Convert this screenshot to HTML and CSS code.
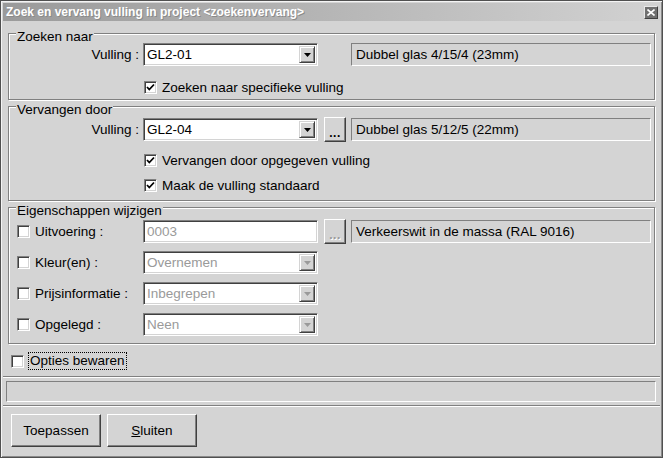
FILE: index.html
```html
<!DOCTYPE html>
<html>
<head>
	<title>Zoek en vervang vulling</title>
	<link rel="stylesheet" href="styles.css">
</head>
<body>
<div class="window">
	<div class="titlebar">
		<span class="title">Zoek en vervang vulling in project &lt;zoekenvervang&gt;</span>
		<span class="close">
			<svg width="8" height="7" viewBox="0 0 8 7"><path d="M0.5 0.5 L7.5 6.5 M7.5 0.5 L0.5 6.5" stroke="#fff" stroke-width="1.6"/></svg>
		</span>
	</div>
	<div class="client">

		<div class="group g1">
			<span class="legend">Zoeken naar</span>
			<div class="row">
				<span class="lbl">Vulling :</span>
				<div class="combo">
					<span class="val">GL2-01</span>
					<span class="drop"><svg width="7" height="4" viewBox="0 0 7 4"><path d="M0 0 H7 L3.5 4 Z" fill="#000"/></svg></span>
				</div>
				<div class="static far">Dubbel glas 4/15/4 (23mm)</div>
			</div>
			<div class="check-row first">
				<span class="box"><svg width="9" height="9" viewBox="0 0 9 9"><path d="M1 4 L3.3 6.5 L8 1.5" stroke="#000" stroke-width="1.8" fill="none"/></svg></span>
				<span>Zoeken naar specifieke vulling</span>
			</div>
		</div>

		<div class="group g2">
			<span class="legend">Vervangen door</span>
			<div class="row">
				<span class="lbl">Vulling :</span>
				<div class="combo">
					<span class="val">GL2-04</span>
					<span class="drop"><svg width="7" height="4" viewBox="0 0 7 4"><path d="M0 0 H7 L3.5 4 Z" fill="#000"/></svg></span>
				</div>
				<div class="dots-btn"><span>...</span></div>
				<div class="static">Dubbel glas 5/12/5 (22mm)</div>
			</div>
			<div class="check-row first">
				<span class="box"><svg width="9" height="9" viewBox="0 0 9 9"><path d="M1 4 L3.3 6.5 L8 1.5" stroke="#000" stroke-width="1.8" fill="none"/></svg></span>
				<span>Vervangen door opgegeven vulling</span>
			</div>
			<div class="check-row">
				<span class="box"><svg width="9" height="9" viewBox="0 0 9 9"><path d="M1 4 L3.3 6.5 L8 1.5" stroke="#000" stroke-width="1.8" fill="none"/></svg></span>
				<span>Maak de vulling standaard</span>
			</div>
		</div>

		<div class="group g3">
			<span class="legend">Eigenschappen wijzigen</span>
			<div class="row prop">
				<span class="plbl"><span class="box"></span>Uitvoering :</span>
				<div class="combo off"><span class="val">0003</span></div>
				<div class="dots-btn off"><span>...</span></div>
				<div class="static">Verkeerswit in de massa (RAL 9016)</div>
			</div>
			<div class="row prop">
				<span class="plbl"><span class="box"></span>Kleur(en) :</span>
				<div class="combo off">
					<span class="val">Overnemen</span>
					<span class="drop"><svg width="7" height="4" viewBox="0 0 7 4"><path d="M0 0 H7 L3.5 4 Z" fill="#9a9a9a"/></svg></span>
				</div>
			</div>
			<div class="row prop">
				<span class="plbl"><span class="box"></span>Prijsinformatie :</span>
				<div class="combo off">
					<span class="val">Inbegrepen</span>
					<span class="drop"><svg width="7" height="4" viewBox="0 0 7 4"><path d="M0 0 H7 L3.5 4 Z" fill="#9a9a9a"/></svg></span>
				</div>
			</div>
			<div class="row prop">
				<span class="plbl"><span class="box"></span>Opgelegd :</span>
				<div class="combo off">
					<span class="val">Neen</span>
					<span class="drop"><svg width="7" height="4" viewBox="0 0 7 4"><path d="M0 0 H7 L3.5 4 Z" fill="#9a9a9a"/></svg></span>
				</div>
			</div>
		</div>

		<div class="save-row">
			<span class="box"></span>
			<span class="focus">Opties bewaren</span>
		</div>

		<div class="sep"></div>
		<div class="status"></div>
		<div class="sep"></div>

		<div class="buttons">
			<div class="btn">Toepassen</div>
			<div class="btn"><u>S</u>luiten</div>
		</div>
	</div>
</div>
</body>
</html>
```

FILE: styles.css
```css
*{
	box-sizing: border-box;
}
body{
	margin: 0;
	font-family: "Liberation Sans", Arial, sans-serif;
	font-size: 13.5px;
	color: #000;
}
.window{
	width: 663px;
	height: 458px;
	background: #d4d4d4;
	border: 1px solid #505050;
	box-shadow: inset 1px 1px 0 #f4f4f4, inset -1px -1px 0 #8a8a8a;
	padding: 2px;
	display: flex;
	flex-direction: column;
}
.titlebar{
	height: 18px;
	display: flex;
	align-items: center;
	justify-content: space-between;
	padding: 0 2px 0 3px;
	background: linear-gradient(to right, #9a9a9a, #d2d2d2);
}
.title{
	color: #fff;
	font-weight: bold;
	font-size: 12px;
	text-shadow: 1px 1px 0 #8a8a8a;
}
.close{
	width: 14px;
	height: 13px;
	display: flex;
	align-items: center;
	justify-content: center;
	background: #707070;
	border: 1px solid;
	border-color: #e8e8e8 #404040 #404040 #e8e8e8;
}
.client{
	flex: 1;
	display: flex;
	flex-direction: column;
}

/* group boxes */
.group{
	position: relative;
	margin: 0 5px 0 5px;
	border: 1px solid #808080;
	box-shadow: inset 1px 1px 0 #fff, 1px 1px 0 #fff;
}
.legend{
	position: absolute;
	top: -5px;
	left: 7px;
	padding: 0 1px;
	line-height: 16px;
	background: #d4d4d4;
}
.g1{
	margin-top: 12px;
	padding: 9px 0 3px;
}
.g2{
	margin-top: 6px;
	padding: 11px 0 6px;
}
.g3{
	margin-top: 6px;
	padding: 12px 0 7px;
}
.row{
	display: flex;
	align-items: center;
	height: 23px;
}
.row.prop + .row.prop{
	margin-top: 8px;
}
.lbl{
	width: 134px;
	padding-right: 4px;
	text-align: right;
}
.plbl{
	width: 134px;
	padding-left: 8px;
	display: flex;
	align-items: center;
	gap: 5px;
}

/* sunken edit / combo */
.combo{
	width: 175px;
	height: 23px;
	display: flex;
	align-items: stretch;
	padding: 2px;
	background: #fff;
	border: 1px solid;
	border-color: #808080 #fff #fff #808080;
	box-shadow: inset 1px 1px 0 #404040, inset -1px -1px 0 #d4d4d4;
}
.val{
	flex: 1;
	padding-left: 1px;
	line-height: 17px;
}
.combo.off .val{
	color: #9a9a9a;
}
.drop{
	width: 16px;
	display: flex;
	align-items: center;
	justify-content: center;
	background: #d4d4d4;
	border: 1px solid;
	border-color: #d4d4d4 #404040 #404040 #d4d4d4;
	box-shadow: inset 1px 1px 0 #fff, inset -1px -1px 0 #808080;
}
.dots-btn{
	width: 22px;
	height: 25px;
	margin-left: 6px;
	display: flex;
	align-items: flex-end;
	justify-content: center;
	padding-bottom: 2px;
	font-weight: bold;
	font-size: 12px;
	line-height: 12px;
	letter-spacing: 0.5px;
	background: #d4d4d4;
	border: 1px solid;
	border-color: #fff #404040 #404040 #fff;
	box-shadow: inset -1px -1px 0 #808080;
}
.dots-btn.off{
	color: #9a9a9a;
	text-shadow: 1px 1px 0 #fff;
}
.static{
	width: 300px;
	height: 23px;
	margin-left: 5px;
	padding-left: 4px;
	line-height: 21px;
	border: 1px solid;
	border-color: #808080 #fff #fff #808080;
}
.static.far{
	margin-left: 33px;
}

/* checkboxes */
.box{
	width: 13px;
	height: 13px;
	flex: none;
	display: flex;
	align-items: center;
	justify-content: center;
	background: #fff;
	border: 1px solid;
	border-color: #808080 #fff #fff #808080;
	box-shadow: inset 1px 1px 0 #404040, inset -1px -1px 0 #d4d4d4;
}
.check-row{
	display: flex;
	align-items: center;
	gap: 5px;
	height: 18px;
	margin: 7px 0 0 135px;
}
.g1 .check-row.first{
	margin-top: 12px;
}
.g2 .check-row.first{
	margin-top: 10px;
}
.save-row{
	display: flex;
	align-items: center;
	gap: 4px;
	height: 18px;
	margin: 8px 0 0 8px;
}
.focus{
	border: 1px dotted #000;
	padding: 0 1px;
	line-height: 16px;
}

/* footer */
.sep{
	height: 2px;
	border-top: 1px solid #808080;
	border-bottom: 1px solid #fff;
	margin-top: 6px;
}
.status{
	height: 21px;
	margin: 3px 4px 0 3px;
	border: 1px solid;
	border-color: #808080 #fff #fff #808080;
}
.status + .sep{
	margin-top: 3px;
}
.buttons{
	display: flex;
	gap: 6px;
	margin: 7px 0 0 8px;
}
.btn{
	width: 90px;
	height: 33px;
	display: flex;
	align-items: center;
	justify-content: center;
	background: #d4d4d4;
	border: 1px solid;
	border-color: #fff #404040 #404040 #fff;
	box-shadow: inset -1px -1px 0 #808080;
}
```
